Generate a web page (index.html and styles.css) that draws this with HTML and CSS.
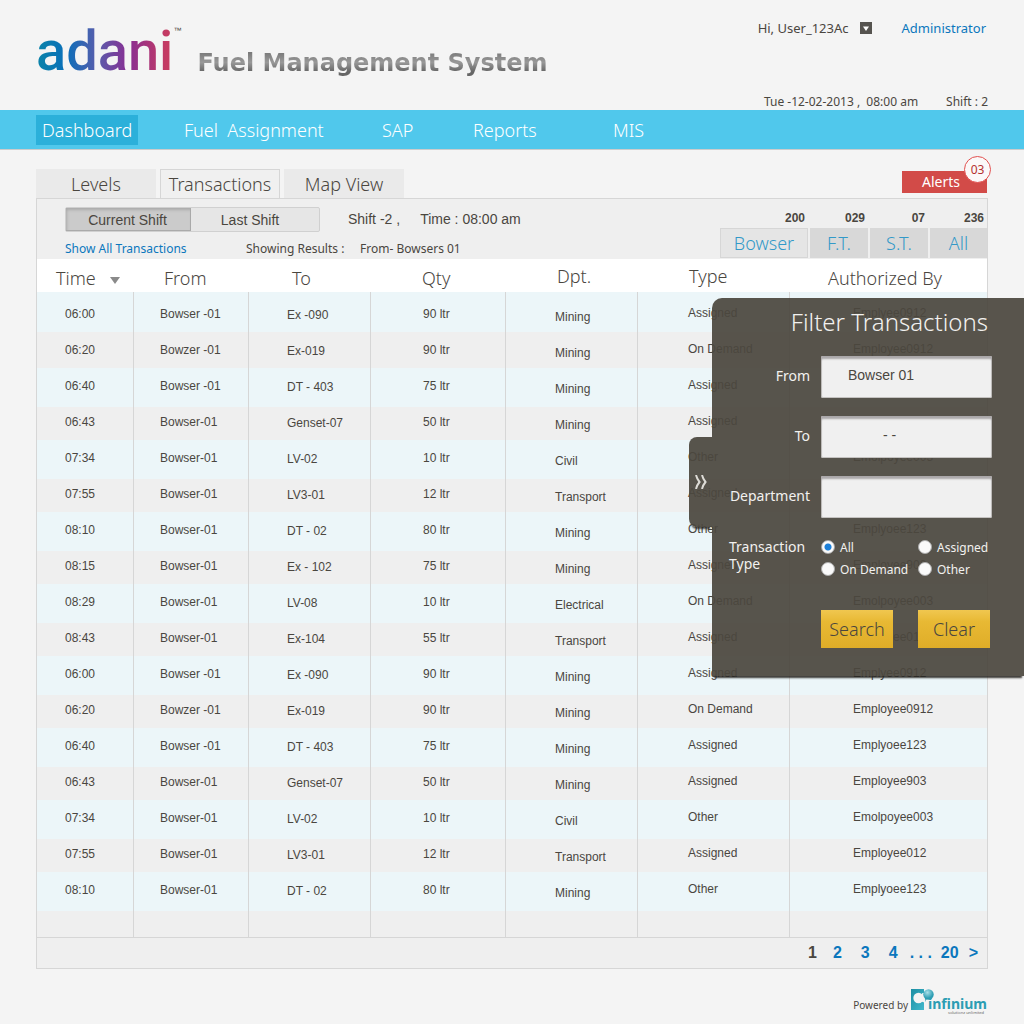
FILE: index.html
```html
<!DOCTYPE html>
<html lang="en">
<head>
<meta charset="utf-8">
<title>Fuel Management System</title>
<link rel="stylesheet" href="styles.css">
</head>
<body>
<header class="header">
  <div class="brand">
    <span class="logo">adani</span><span class="tm">™</span>
    <h1 class="title">Fuel Management System</h1>
  </div>
  <div class="account">
    <div class="user-line">
      <span>Hi, User_123Ac</span>
      <button class="user-menu" type="button" aria-label="User menu"><svg width="12" height="12" viewBox="0 0 12 12"><path d="M3 4.500h6L6 9z" fill="#fff"/></svg></button>
      <a class="role" href="#">Administrator</a>
    </div>
    <div class="date-line"><span>Tue -12-02-2013 ,&nbsp; 08:00 am</span><span>Shift : 2</span></div>
  </div>
</header>
<nav class="nav">
  <a class="current" href="#">Dashboard</a>
  <a href="#">Fuel&nbsp; Assignment</a>
  <a href="#">SAP</a>
  <a href="#">Reports</a>
  <a href="#">MIS</a>
</nav>
<main class="main">
  <div class="tab-row">
    <div class="tabs">
      <button type="button">Levels</button>
      <button type="button" class="active">Transactions</button>
      <button type="button">Map View</button>
    </div>
    <button type="button" class="alerts">Alerts<span class="badge">03</span></button>
  </div>
  <section class="panel">
    <div class="toolbar">
      <div class="tools">
        <div class="shift-line">
          <div class="segment"><button type="button" class="on">Current Shift</button><button type="button">Last Shift</button></div>
          <span class="shift">Shift -2 ,</span><span>Time : 08:00 am</span>
        </div>
        <div class="result-line"><a href="#">Show All Transactions</a><span>Showing Results :</span><span>From- Bowsers 01</span></div>
      </div>
      <div class="counts">
        <div class="count wide"><b>200</b><button type="button">Bowser</button></div>
        <div class="count"><b>029</b><button type="button">F.T.</button></div>
        <div class="count"><b>07</b><button type="button">S.T.</button></div>
        <div class="count"><b>236</b><button type="button">All</button></div>
      </div>
    </div>
    <table class="grid">
      <colgroup><col class="c-time"><col class="c-from"><col class="c-to"><col class="c-qty"><col class="c-dpt"><col class="c-type"><col></colgroup>
      <thead><tr><th>Time <svg class="sort" width="10" height="7" viewBox="0 0 10 7"><path d="M0 0h10L5 7z" fill="#8a8a8a"/></svg></th><th>From</th><th>To</th><th>Qty</th><th>Dpt.</th><th>Type</th><th>Authorized By</th></tr></thead>
      <tbody>
        <tr><td>06:00</td><td>Bowser -01</td><td>Ex -090</td><td>90 ltr</td><td>Mining</td><td>Assigned</td><td>Emplyee0912</td></tr>
        <tr><td>06:20</td><td>Bowzer -01</td><td>Ex-019</td><td>90 ltr</td><td>Mining</td><td>On Demand</td><td>Employee0912</td></tr>
        <tr><td>06:40</td><td>Bowser -01</td><td>DT - 403</td><td>75 ltr</td><td>Mining</td><td>Assigned</td><td>Emplyoee123</td></tr>
        <tr><td>06:43</td><td>Bowser-01</td><td>Genset-07</td><td>50 ltr</td><td>Mining</td><td>Assigned</td><td>Employee903</td></tr>
        <tr><td>07:34</td><td>Bowser-01</td><td>LV-02</td><td>10 ltr</td><td>Civil</td><td>Other</td><td>Emolpoyee003</td></tr>
        <tr><td>07:55</td><td>Bowser-01</td><td>LV3-01</td><td>12 ltr</td><td>Transport</td><td>Assigned</td><td>Employee012</td></tr>
        <tr><td>08:10</td><td>Bowser-01</td><td>DT - 02</td><td>80 ltr</td><td>Mining</td><td>Other</td><td>Emplyoee123</td></tr>
        <tr><td>08:15</td><td>Bowser-01</td><td>Ex - 102</td><td>75 ltr</td><td>Mining</td><td>Assigned</td><td>Employee903</td></tr>
        <tr><td>08:29</td><td>Bowser-01</td><td>LV-08</td><td>10 ltr</td><td>Electrical</td><td>On Demand</td><td>Emolpoyee003</td></tr>
        <tr><td>08:43</td><td>Bowser-01</td><td>Ex-104</td><td>55 ltr</td><td>Transport</td><td>Assigned</td><td>Employee012</td></tr>
        <tr><td>06:00</td><td>Bowser -01</td><td>Ex -090</td><td>90 ltr</td><td>Mining</td><td>Assigned</td><td>Emplyee0912</td></tr>
        <tr><td>06:20</td><td>Bowzer -01</td><td>Ex-019</td><td>90 ltr</td><td>Mining</td><td>On Demand</td><td>Employee0912</td></tr>
        <tr><td>06:40</td><td>Bowser -01</td><td>DT - 403</td><td>75 ltr</td><td>Mining</td><td>Assigned</td><td>Emplyoee123</td></tr>
        <tr><td>06:43</td><td>Bowser-01</td><td>Genset-07</td><td>50 ltr</td><td>Mining</td><td>Assigned</td><td>Employee903</td></tr>
        <tr><td>07:34</td><td>Bowser-01</td><td>LV-02</td><td>10 ltr</td><td>Civil</td><td>Other</td><td>Emolpoyee003</td></tr>
        <tr><td>07:55</td><td>Bowser-01</td><td>LV3-01</td><td>12 ltr</td><td>Transport</td><td>Assigned</td><td>Employee012</td></tr>
        <tr><td>08:10</td><td>Bowser-01</td><td>DT - 02</td><td>80 ltr</td><td>Mining</td><td>Other</td><td>Emplyoee123</td></tr>
        <tr class="filler"><td></td><td></td><td></td><td></td><td></td><td></td><td></td></tr>
      </tbody>
    </table>
    <div class="pages">
      <span>1</span><a href="#">2</a><a href="#">3</a><a href="#">4</a><span class="more">. . .</span><a href="#">20</a><a href="#">&gt;</a>
    </div>
  </section>
  <aside class="filter">
    <button type="button" class="handle" aria-label="Collapse filter"><svg width="12" height="14" viewBox="0 0 12 14" fill="none" stroke="#dddbd6" stroke-width="2"><path d="M1 0q1 4 3.500 7-2.500 3-3.500 7M7 0q1 4 3.500 7-2.500 3-3.500 7"/></svg></button>
    <form class="filter-body">
      <h2>Filter Transactions</h2>
      <div class="field"><label for="from">From</label><input id="from" type="text" value="Bowser 01"></div>
      <div class="field"><label for="to">To</label><input id="to" class="empty" type="text" value="- -"></div>
      <div class="field"><label for="dept">Department</label><input id="dept" type="text"></div>
      <div class="types" role="radiogroup" aria-labelledby="type-label">
        <span id="type-label">Transaction Type</span>
        <div class="options">
          <label><input type="radio" name="type" checked>All</label>
          <label><input type="radio" name="type">Assigned</label>
          <label><input type="radio" name="type">On Demand</label>
          <label><input type="radio" name="type">Other</label>
        </div>
      </div>
      <div class="actions"><button type="button">Search</button><button type="button">Clear</button></div>
    </form>
  </aside>
</main>
<footer class="footer">
  <span>Powered by</span>
  <svg width="77" height="26" viewBox="0 0 77 26" role="img" aria-label="infinium">
    <defs><linearGradient id="teal" x1="0" y1="0" x2="1" y2="1"><stop offset="0" stop-color="#1c8ea3"/><stop offset="1" stop-color="#43b9cc"/></linearGradient>
    <radialGradient id="ball" cx=".4" cy=".3" r=".8"><stop offset="0" stop-color="#a9dfe8"/><stop offset=".7" stop-color="#2c9db3"/></radialGradient></defs>
    <path d="M0 0h13v21H0z" fill="url(#teal)"/>
    <circle cx="7.500" cy="9" r="5.200" fill="#f4f4f4"/>
    <path d="M11 4q2 1 3-1v12q-2-3-3-2z" fill="#f4f4f4"/>
    <path d="M12 5q3 3 2 8l1-2q1-2 4-1z" fill="#2596aa"/>
    <circle cx="17.500" cy="5.500" r="5.200" fill="url(#ball)"/>
    <text x="17" y="20" class="inf">infinium</text>
    <text x="37" y="25" class="inf-sub">solutionz unlimited</text>
  </svg>
</footer>
</body>
</html>
```
FILE: styles.css
```css
* { box-sizing: border-box; }
body { margin: 0; background: #f4f4f4; color: #4a463f; font-family: "Noto Sans", "Open Sans", sans-serif; font-size: 12px; }
button, input { font: inherit; color: inherit; border: 0; padding: 0; margin: 0; background: none; }
a { text-decoration: none; color: #0b77bd; }
h1, h2 { margin: 0; }

.header { height: 110px; padding: 0 36px; display: flex; justify-content: space-between; }
.brand { display: flex; align-items: flex-start; }
.logo { font: 500 56px/66px Roboto, sans-serif; padding-top: 18px; background: linear-gradient(90deg, #0b84a8, #0a6fba 22%, #5a5cab 45%, #8a2d92 68%, #c43b63 95%); -webkit-background-clip: text; background-clip: text; color: transparent; }
.tm { font: 8px/10px "Liberation Sans", sans-serif; padding-top: 26px; width: 24px; }
.title { font: bold 24px/30px "DejaVu Sans", sans-serif; padding-top: 48px; background: linear-gradient(#777 66%, #999 80%, #666 92%); -webkit-background-clip: text; background-clip: text; color: transparent; }
.account { display: flex; flex-direction: column; justify-content: space-between; padding-top: 18px; }
.user-line { display: flex; align-items: center; justify-content: flex-end; gap: 11px; font-size: 13px; line-height: 20px; padding-right: 2px; }
.user-menu { width: 12px; height: 12px; background: #55534f; display: flex; }
.role { margin-left: 19px; }
.date-line { display: flex; justify-content: flex-end; gap: 28px; font-size: 12px; line-height: 16px; }

.nav { height: 40px; background: #50c8ec; border-bottom: 1px solid #ccc; padding: 0 36px; display: grid; grid-template-columns: 148px 198px 91px 140px 1fr; align-items: center; justify-items: start; }
.nav a { color: #fff; font-size: 18px; line-height: 30px; font-weight: 300; }
.nav .current { background: #2bb0da; padding: 0 6px; }

.main { position: relative; padding: 19px 36px 0; }
.tab-row { display: flex; justify-content: space-between; align-items: flex-end; height: 29px; padding-right: 1px; }
.tabs { display: flex; gap: 4px; }
.tabs button { width: 120px; height: 29px; background: #eaeaea; font-size: 18px; font-weight: 300; line-height: 28px; }
.tabs .active { background: #f0f0f0; border: 1px solid #d6d6d6; border-bottom: 0; }
.alerts { position: relative; width: 85px; height: 22px; margin-bottom: 5px; padding-right: 7px; background: #d24b48; color: #fff; font-size: 14px; line-height: 22px; }
.badge { position: absolute; right: -4px; top: -15px; width: 27px; height: 27px; border: 1px solid #e2504f; border-radius: 50%; background: #fbf8f8; color: #b5302f; font-size: 12px; line-height: 25px; }

.panel { border: 1px solid #d6d6d6; background: #efefef; }
.toolbar { display: flex; justify-content: space-between; height: 60px; }
.tools { padding: 8px 0 0 28px; }
.shift-line { display: flex; align-items: center; font: 14px/25px "Liberation Sans", sans-serif; }
.segment { display: flex; width: 255px; height: 25px; border: 1px solid #d0d0d0; border-radius: 2px; background: #e6e6e6; }
.segment button { flex: 1; padding-right: 10px; line-height: 24px; }
.segment .on { flex: 0 0 125px; background: #cbcbcb; padding: 0 2px 0 0; box-shadow: inset 1px 2px 3px #aaa, inset -1px -1px 0 #aaa; }
.shift { margin: 0 20px 0 28px; }
.result-line { display: grid; grid-template-columns: 181px 114px auto; font-size: 12px; line-height: 18px; padding-top: 8px; }
.counts { display: flex; gap: 2px; padding-top: 12px; }
.count { width: 58px; text-align: right; }
.count.wide { width: 88px; }
.count:last-child { width: 57px; }
.count b { display: block; font: bold 12px/14px "Liberation Sans", sans-serif; padding: 0 3px 3px 0; }
.count button { width: 100%; height: 30px; font-size: 18px; line-height: 28px; color: #3299c8; background: #d8d8d8; font-weight: 300; }
.count.wide button { background: #e5e5e5; border: 1px solid #d6d6d6; }

.grid { width: 100%; table-layout: fixed; border-collapse: separate; border-spacing: 0; }
.c-time { width: 97px; }
.c-from { width: 115px; }
.c-to { width: 122px; }
.c-qty { width: 135px; }
.c-dpt { width: 132px; }
.c-type { width: 152px; }
.grid th { height: 33px; padding: 4px 0 0 38px; background: #fff; text-align: left; font-size: 18px; line-height: 24px; font-weight: 300; white-space: nowrap; }
.grid th:nth-child(1) { padding-left: 19px; }
.grid th:nth-child(2) { padding-left: 30px; }
.grid th:nth-child(3) { padding-left: 43px; }
.grid th:nth-child(4) { padding-left: 51px; }
.grid th:nth-child(5), .grid th:nth-child(6) { padding: 0 0 0 51px; }
.sort { margin-left: 10px; vertical-align: 1px; }
.grid td { --shift: 0px; height: 33px; padding: calc(7px + var(--shift)) 0 0 28px; vertical-align: top; border-right: 1px solid #d6d6d6; font: 12px/16px "Liberation Sans", sans-serif; white-space: nowrap; }
.grid tr:nth-child(odd) td { height: 39px; padding-top: calc(10px + var(--shift)); background: #ecf6f9; }
.grid tr:first-child td { height: 40px; padding-top: calc(14px + var(--shift)); }
.grid tr:nth-child(2) td { height: 36px; padding-top: calc(10px + var(--shift)); }
.grid td:nth-child(2) { padding-left: 26px; }
.grid td:nth-child(3) { padding-left: 38px; --shift: 1px; }
.grid td:nth-child(4) { padding-left: 52px; }
.grid td:nth-child(5) { padding-left: 49px; --shift: 3px; }
.grid td:nth-child(6) { padding-left: 50px; --shift: -1px; }
.grid td:nth-child(7) { padding-left: 63px; --shift: -1px; border-right: 0; }
.grid .filler td { height: 26px; padding: 0; }
.pages { border-top: 1px solid #d6d6d6; height: 31px; padding: 0 9px 0 0; display: flex; align-items: center; justify-content: flex-end; gap: 19px; font: bold 16px/32px "Liberation Sans Narrow", "Liberation Sans", sans-serif; }
.pages > :first-child { margin-right: -3px; }
.pages a { color: #0b77bd; }
.pages .more { color: #0b77bd; margin: 0 -10px 0 -7px; }
.pages a:last-child { margin-left: -9px; }

.filter { position: absolute; top: 148px; right: 0; display: flex; align-items: flex-start; }
.handle { width: 23px; height: 90px; margin-top: 139px; border-radius: 8px 0 0 8px; background: rgba(75, 71, 62, .93); box-shadow: 0 4px 2px -2px rgba(40, 38, 34, .8); display: flex; align-items: center; padding-left: 6px; }
.filter-body { width: 312px; height: 378px; padding: 8px 32px 0 17px; border-radius: 10px 0 0 0; background: rgba(75, 71, 62, .93); box-shadow: 0 4px 2px -2px rgba(40, 38, 34, .9); color: #f2f1ef; }
.filter h2 { font-size: 24px; line-height: 32px; font-weight: 300; text-align: right; padding-right: 4px; margin-bottom: 18px; white-space: nowrap; }
.field { display: grid; grid-template-columns: 81px 171px; gap: 11px; align-items: center; text-align: right; font-size: 14px; margin-bottom: 18px; }
.field label { padding-bottom: 3px; }
.field input { height: 42px; border-radius: 2px; padding: 0 27px 4px; background: #f0f0f0; color: #4a463f; font: 14px/18px "Liberation Sans", sans-serif; box-shadow: inset 0 3px 2px #aaa7a9, inset 0 0 0 1px #c4c2c0; width: 171px; }
.field .empty { padding-left: 62px; }
.types { display: grid; grid-template-columns: 81px 171px; gap: 11px; font-size: 14px; line-height: 17px; padding-top: 2px; }
.options { display: grid; grid-template-columns: 97px auto; grid-auto-rows: 22px; font-size: 12px; }
.options label { display: flex; align-items: center; height: 18px; gap: 5px; white-space: nowrap; }
.options input { appearance: none; width: 14px; height: 14px; flex: none; border-radius: 50%; background: #fafafa; border: 1px solid #aaa; }
.options input:checked { background: radial-gradient(circle, #1c7fd8 0 3px, #fafafa 4px); }
.actions { display: flex; gap: 25px; margin: 28px 0 0 92px; }
.actions button { width: 72px; height: 38px; font-size: 18px; font-weight: 300; color: #4a463f; background: linear-gradient(#f0c750, #e8b934 30%, #dfad28); }

.footer { display: flex; justify-content: flex-end; align-items: center; gap: 3px; padding: 20px 36px 8px; font-size: 10px; line-height: 14px; }
.footer span { padding-top: 6px; }
.inf { font: bold 14px "Noto Sans", sans-serif; fill: #2c9db3; }
.inf-sub { font: 4px "Noto Sans", sans-serif; fill: #666; }
```
